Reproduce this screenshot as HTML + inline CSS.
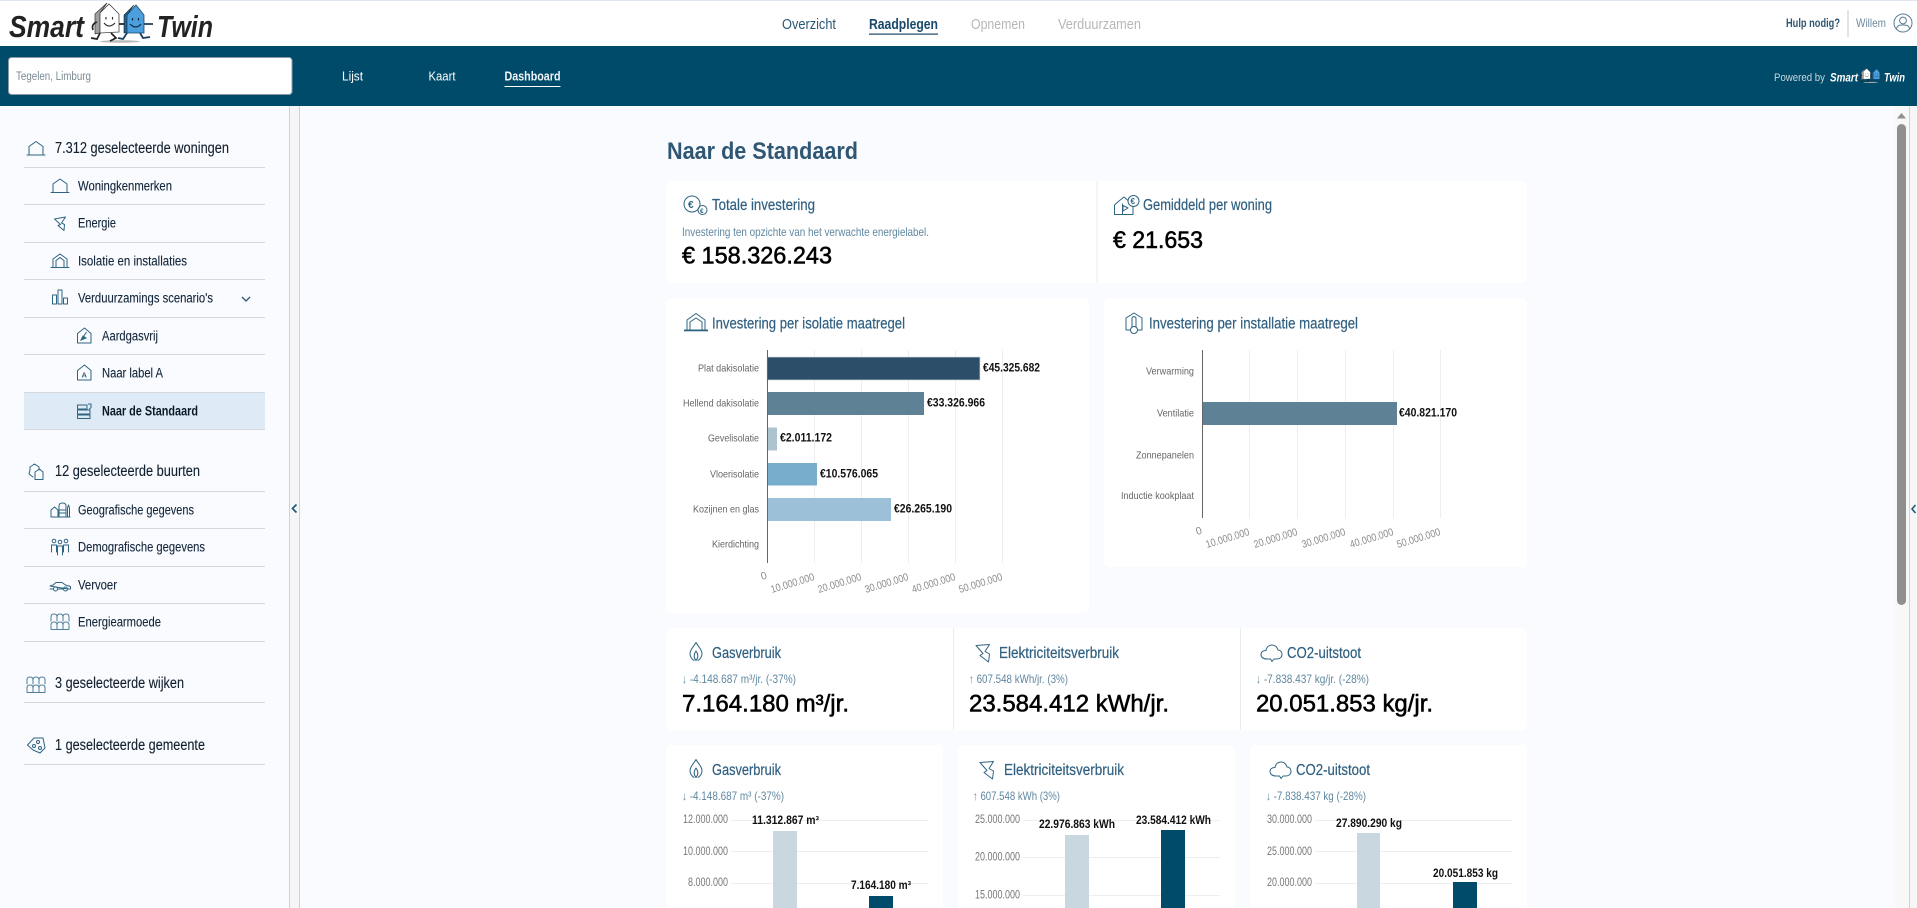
<!DOCTYPE html>
<html lang="nl"><head><meta charset="utf-8"><title>Smart Twin - Naar de Standaard</title>
<style>
html,body{margin:0;padding:0;width:1917px;height:908px;overflow:hidden;background:#f9fbff}
svg{display:block;font-family:"Liberation Sans",Arial,sans-serif}
.ln{stroke:#d5d9dd;stroke-width:1}
.m{font-size:15.5px;fill:#12202e;stroke:#12202e;stroke-width:.12px}
.s{font-size:13.5px;fill:#14263a;stroke:#14263a;stroke-width:.12px}
.t{font-size:15.5px;fill:#2f5f80;stroke:#2f5f80;stroke-width:.2px}
.v{font-size:24px;fill:#000;stroke:#000;stroke-width:.55px}
.u{font-size:12px;fill:#5f87a0}
.n{font-size:14.5px}
.a{font-size:10.5px;fill:#666}
.k{font-size:10.5px;fill:#8a8a8a}
.y{font-size:11.5px;fill:#777}
.b{font-size:11.5px;font-weight:bold;fill:#111}
.i{fill:none;stroke:#2f6480;stroke-width:1;stroke-linejoin:round;stroke-linecap:round}
.g{stroke:#eceef0;stroke-width:1}
</style></head><body>
<svg width="1917" height="908" viewBox="0 0 1917 908" xmlns="http://www.w3.org/2000/svg">
<defs>
<g id="logo">
<ellipse cx="29" cy="41.500" rx="20" ry="1.300" fill="#bbb"/>
<path d="M16 3 L4 14 L4 34 L9 33 L9 13Z" fill="#a0a0a0" stroke="#333" stroke-width=".7"/>
<path d="M9 13 L18 4 L28 14 L28 32 L9 33Z" fill="#fff" stroke="#444" stroke-width=".8"/>
<path d="M13 23 Q18 29 24 23" fill="none" stroke="#222" stroke-width="1"/>
<path d="M15 17v2.500M21.500 17v2.500" stroke="#222" stroke-width="1.100"/>
<path d="M43 5 L33 15 L33 33 L36 33 L36 15Z" fill="#23618c" stroke="#123" stroke-width=".6"/>
<path d="M36 15 L45 5 L53 15 L53 33 L36 33Z" fill="#4a9fdc" stroke="#16466b" stroke-width=".8"/>
<path d="M39 24 Q45 30 50 24" fill="none" stroke="#123" stroke-width="1"/>
<path d="M41.500 18v2.500M47.500 18v2.500" stroke="#123" stroke-width="1.100"/>
<path d="M9 33 L6 39 L0 38 M20 33 L25 38 L19 41 M6 22 Q0 24 2 30 M28 24 H33" fill="none" stroke="#222" stroke-width="1.700"/>
<path d="M36 33 L32 39 L27 38 M49 33 L52 38 L59 37 M53 24 H62" fill="none" stroke="#1c3f5a" stroke-width="1.800"/>
</g>
<g id="house" class="i"><path d="M0 13.500H18M2 13.500V5L9 0 16 5V13.500"/></g>
<g id="bolt" class="i"><path d="M0 2 L11 0 L7 6 L10 7.500 L9.500 13.500 L3.500 8.500 L6 7.500 Z"/></g>
<g id="ins" class="i"><path d="M0 13.500H18M2 13.500V5L9 0 16 5V13.500M5 13V6.500L9 3.500 13 6.500V13"/></g>
<g id="arches" class="i" style="stroke:#4f7e99"><path d="M0 7V3Q0 0 3 0T6 3V7M6 3Q6 0 9 0T12 3V7M12 3Q12 0 15 0T18 3V7M0 15V11Q0 8 3 8T6 11V15M6 11Q6 8 9 8T12 11V15M12 11Q12 8 15 8T18 11V15M0 15.500H18"/></g>
<g id="flame" class="i"><path d="M4 18 C1 16 0 13.500 0 11 C0 7 4 4 6 0 C8 4 12 7 12 11 C12 13.500 11 16 8 18 M6 18 C3.500 15 3.500 12 6 8.500 C8.500 12 8.500 15 6 18Z"/></g>
<g id="bolt2" class="i"><path d="M0 1 L13.500 0 L9 7 L13.500 9.500 L12.500 17.500 L4 11 L7 9 Z"/></g>
<g id="cloud" class="i"><path d="M6 15 C2 15 0 13 0 10.500 C0 8 2 6.500 5 6.500 C5.500 3 8 1 11 1 C14 1 16 3 17 6 C19.500 6 21 8 21 10.500 C21 13 19 15 16 15 L13 15 L11 17.500 L9.500 15Z"/></g>
</defs>

<rect width="1917" height="908" fill="#f9fbff"/>
<!-- header -->
<rect width="1917" height="46" fill="#fff"/><rect width="1917" height="1" fill="#e1e7ef"/>
<text x="9" y="37" font-size="31" font-style="italic" font-weight="bold" fill="#222" textLength="75" lengthAdjust="spacingAndGlyphs">Smart</text>
<use href="#logo" x="91"/>
<text x="157" y="37" font-size="31" font-style="italic" font-weight="bold" fill="#222" textLength="56" lengthAdjust="spacingAndGlyphs">Twin</text>
<text x="782" y="29" class="n" fill="#2a5877" textLength="54" lengthAdjust="spacingAndGlyphs">Overzicht</text>
<text x="869" y="29" class="n" font-weight="bold" fill="#17486a" textLength="69" lengthAdjust="spacingAndGlyphs">Raadplegen</text>
<rect x="869" y="33.500" width="69" height="1.200" fill="#17486a"/>
<text x="971" y="29" class="n" fill="#b5b7ba" textLength="54" lengthAdjust="spacingAndGlyphs">Opnemen</text>
<text x="1058" y="29" class="n" fill="#b5b7ba" textLength="83" lengthAdjust="spacingAndGlyphs">Verduurzamen</text>
<text x="1786" y="27" font-size="12" font-weight="bold" fill="#2f5673" textLength="54" lengthAdjust="spacingAndGlyphs">Hulp nodig?</text>
<rect x="1847.500" y="10" width="1" height="27" fill="#c3c8cc"/>
<text x="1856" y="27" font-size="12" fill="#6e8ba0" textLength="30" lengthAdjust="spacingAndGlyphs">Willem</text>
<g fill="none" stroke="#5a7d94" stroke-width="1"><circle cx="1903" cy="23" r="9"/><circle cx="1903" cy="20.500" r="3.400"/><path d="M1896.500 29 C1897 25 1900 25 1903 25 C1906 25 1909 25 1909.500 29"/></g>

<!-- blue bar -->
<rect y="46" width="1917" height="60" fill="#004a6a"/>
<rect x="8.500" y="57.500" width="283.500" height="37" rx="3" fill="#fff" stroke="#8b9aa5"/>
<text x="16" y="80" font-size="11.500" fill="#7a8a95" textLength="75" lengthAdjust="spacingAndGlyphs">Tegelen, Limburg</text>
<text x="342" y="80.500" font-size="12.500" fill="#fff" textLength="21" lengthAdjust="spacingAndGlyphs">Lijst</text>
<text x="428.500" y="80.500" font-size="12.500" fill="#fff" textLength="27" lengthAdjust="spacingAndGlyphs">Kaart</text>
<text x="504.500" y="80.500" font-size="12.500" font-weight="bold" fill="#f2f6f9" textLength="56" lengthAdjust="spacingAndGlyphs">Dashboard</text>
<rect x="504.500" y="86" width="56" height="1" fill="#fff"/>
<text x="1774" y="81" font-size="11" fill="#c9d6de" textLength="51" lengthAdjust="spacingAndGlyphs">Powered by</text>
<text x="1830" y="81.500" font-size="12" font-style="italic" font-weight="bold" fill="#fff" textLength="28" lengthAdjust="spacingAndGlyphs">Smart</text>
<use href="#logo" transform="translate(1860 67) scale(.37)"/>
<text x="1884" y="81.500" font-size="12" font-style="italic" font-weight="bold" fill="#fff" textLength="21" lengthAdjust="spacingAndGlyphs">Twin</text>

<!-- sidebar strip -->
<rect x="289" y="106" width="10" height="802" fill="#f6f6f6"/>
<rect x="289" y="106" width="1" height="802" fill="#d2d2d2"/><rect x="299" y="106" width="1" height="802" fill="#d2d2d2"/>
<path d="M296.500 504.500 L292.500 508.500 L296.500 512.500" fill="none" stroke="#1d5a80" stroke-width="1.700"/>

<!-- sidebar -->
<rect x="24" y="392" width="241" height="37" fill="#deeaf5"/>
<g class="ln">
<path d="M24 167.500H265M24 204.500H265M24 242.500H265M24 279.500H265M24 317.500H265M24 354.500H265M24 392.500H265M24 429.500H265M24 491.500H265M24 528.500H265M24 566.500H265M24 603.500H265M24 641.500H265M24 702.500H265M24 764.500H265"/>
</g>
<use href="#house" x="27" y="141.500"/>
<text x="55" y="153" class="m" textLength="174" lengthAdjust="spacingAndGlyphs">7.312 geselecteerde woningen</text>
<use href="#house" x="51" y="179"/>
<text x="78" y="190.500" class="s" textLength="94" lengthAdjust="spacingAndGlyphs">Woningkenmerken</text>
<use href="#bolt" x="54.500" y="217"/>
<text x="78" y="227.500" class="s" textLength="38" lengthAdjust="spacingAndGlyphs">Energie</text>
<use href="#ins" x="51" y="254"/>
<text x="78" y="265.500" class="s" textLength="109" lengthAdjust="spacingAndGlyphs">Isolatie en installaties</text>
<g class="i"><rect x="52.500" y="295" width="4" height="9"/><rect x="58" y="290" width="4" height="14"/><rect x="63.500" y="298" width="4" height="6"/></g>
<text x="78" y="302.500" class="s" textLength="135" lengthAdjust="spacingAndGlyphs">Verduurzamings scenario's</text>
<path d="M242 297 L246 301 L250 297" fill="none" stroke="#2f5673" stroke-width="1.300"/>
<g class="i"><path d="M77.500 343V333.500L84.500 328 91 333.500V343Z"/></g><path d="M86.500 332 L82 339 M81 340 L83 336 L86 338Z" stroke="#2f6480" fill="#2f6480"/>
<text x="102" y="340.500" class="s" textLength="56" lengthAdjust="spacingAndGlyphs">Aardgasvrij</text>
<g class="i"><path d="M77.500 380V370.500L84.500 365 91 370.500V380Z"/></g><text x="81.500" y="377.500" font-size="7.500" font-weight="bold" fill="#2f6480">A</text>
<text x="102" y="377.500" class="s" textLength="61" lengthAdjust="spacingAndGlyphs">Naar label A</text>
<g class="i" stroke-width="1.200"><path d="M77.500 405H87V409H77.500ZM77.500 410H90V414H77.500ZM77.500 415H90V418.500H77.500ZM88.500 404H91V407.500L89.500 409"/></g>
<text x="102" y="415.500" font-size="13.500" font-weight="bold" fill="#0c1a28" textLength="96" lengthAdjust="spacingAndGlyphs">Naar de Standaard</text>

<g class="i"><path d="M30 470V467L34.500 464 39 467V470M30 470L29 474 33 477M35 472L39.500 469 43 472V479.500H35Z"/></g>
<text x="55" y="476" class="m" textLength="145" lengthAdjust="spacingAndGlyphs">12 geselecteerde buurten</text>
<g class="i"><path d="M51 517V510L54.500 507 58 510V517M51 517H70M59 517V506Q59 503 62.500 503T66 506V517M59 510H66M59 513H66M67.500 517V508L68.500 505 69.500 508V517"/></g>
<text x="78" y="514.500" class="s" textLength="116" lengthAdjust="spacingAndGlyphs">Geografische gegevens</text>
<g class="i"><circle cx="54" cy="541" r="1.800"/><circle cx="60" cy="542" r="1.800"/><circle cx="66" cy="541" r="1.800"/><path d="M51.500 552V545H56.500V552M57.500 555V546H62.500V555M63.500 552V545H68.500V552"/></g>
<text x="78" y="551.500" class="s" textLength="127" lengthAdjust="spacingAndGlyphs">Demografische gegevens</text>
<g class="i"><path d="M50 589H53M58 589H63M68 589H70.500V586.500L65.500 585 62 582.500H56L53 585 50 586Z"/><circle cx="55.500" cy="589" r="2"/><circle cx="65.500" cy="589" r="2"/></g>
<text x="78" y="589.500" class="s" textLength="39" lengthAdjust="spacingAndGlyphs">Vervoer</text>
<use href="#arches" x="51" y="614"/>
<text x="78" y="626.500" class="s" textLength="83" lengthAdjust="spacingAndGlyphs">Energiearmoede</text>
<use href="#arches" x="27" y="677"/>
<text x="55" y="688" class="m" textLength="129" lengthAdjust="spacingAndGlyphs">3 geselecteerde wijken</text>
<g class="i"><path d="M27.500 745L34 738H43L45 748L40 753L33 750Z"/><circle cx="38" cy="742" r="1.500"/><circle cx="34" cy="746" r="1.500"/><circle cx="40" cy="748" r="1.500"/></g>
<text x="55" y="750" class="m" textLength="150" lengthAdjust="spacingAndGlyphs">1 geselecteerde gemeente</text>

<!-- scrollbar and right strip -->
<rect x="1895" y="106" width="14" height="802" fill="#f8f8f8"/>
<path d="M1901.500 113 L1906 118.500H1897Z" fill="#8f8f8f"/>
<rect x="1897" y="124" width="9" height="481" rx="4.500" fill="#8f8f8f"/>
<rect x="1909" y="106" width="8" height="802" fill="#f6f6f6"/><rect x="1909" y="106" width="1" height="802" fill="#d2d2d2"/>
<path d="M1915.500 505 L1912 509 L1915.500 513" fill="none" stroke="#1d5a80" stroke-width="1.600"/>

<!-- title -->
<text x="667" y="159" font-size="24" font-weight="bold" fill="#2f5673" textLength="191" lengthAdjust="spacingAndGlyphs">Naar de Standaard</text>

<!-- card 1 -->
<rect x="666" y="181" width="861" height="102" rx="6" fill="#fff"/>
<rect x="1096.500" y="181" width="1" height="102" fill="#e9ebee"/>
<g class="i" stroke-width="1.200"><circle cx="692" cy="204" r="8"/><circle cx="702.500" cy="210" r="4.500"/></g>
<text x="688" y="208" font-size="10" font-weight="bold" fill="#2f6480">€</text><text x="700" y="213" font-size="6.500" font-weight="bold" fill="#2f6480">€</text>
<text x="712" y="210" class="t" textLength="103" lengthAdjust="spacingAndGlyphs">Totale investering</text>
<text x="682" y="236" class="u" textLength="247" lengthAdjust="spacingAndGlyphs">Investering ten opzichte van het verwachte energielabel.</text>
<text x="682" y="263.500" class="v" textLength="150" lengthAdjust="spacingAndGlyphs">€ 158.326.243</text>
<g class="i" stroke-width="1.100"><path d="M1114.500 205V214.500H1133V205L1124 197 1119 201Z"/><path d="M1122.500 204V214M1123 205.500L1128 208 1123 211Z"/><circle cx="1133.500" cy="201" r="5.500" fill="#fff"/></g>
<text x="1130.500" y="204" font-size="8" font-weight="bold" fill="#2f6480">€</text>
<text x="1143" y="210" class="t" textLength="129" lengthAdjust="spacingAndGlyphs">Gemiddeld per woning</text>
<text x="1113" y="248" class="v" textLength="90" lengthAdjust="spacingAndGlyphs">€ 21.653</text>

<!-- isolatie card -->
<rect x="666" y="298" width="423" height="315" rx="6" fill="#fff"/>
<g class="i" stroke-width="1.100"><path d="M687 330V320L696 313.500 705 320V330M690 329.500V322L696 318 702 322V329.500"/></g><rect x="684" y="329.500" width="24" height="1.800" fill="#2f6480"/>
<text x="712" y="328.500" class="t" textLength="193" lengthAdjust="spacingAndGlyphs">Investering per isolatie maatregel</text>
<g class="g"><path d="M814.500 350V563M861.500 350V563M908.500 350V563M955.500 350V563M1002.500 350V563"/></g>
<rect x="767" y="357" width="213" height="23" fill="#2c4e68" stroke="#d5dde2" stroke-width=".7"/>
<rect x="767" y="392" width="157" height="23" fill="#5f8196"/>
<rect x="767" y="427.500" width="10" height="23" fill="#adc4cf"/>
<rect x="767" y="463" width="50" height="22.500" fill="#78adcc"/>
<rect x="767" y="498" width="124" height="23" fill="#9cc0d8"/>
<rect x="767" y="350" width="1" height="213" fill="#666"/>
<text x="698" y="371.500" class="a" textLength="61" lengthAdjust="spacingAndGlyphs">Plat dakisolatie</text>
<text x="683" y="406.500" class="a" textLength="76" lengthAdjust="spacingAndGlyphs">Hellend dakisolatie</text>
<text x="708" y="441.500" class="a" textLength="51" lengthAdjust="spacingAndGlyphs">Gevelisolatie</text>
<text x="710" y="477.500" class="a" textLength="49" lengthAdjust="spacingAndGlyphs">Vloerisolatie</text>
<text x="693" y="512.500" class="a" textLength="66" lengthAdjust="spacingAndGlyphs">Kozijnen en glas</text>
<text x="712" y="547.500" class="a" textLength="47" lengthAdjust="spacingAndGlyphs">Kierdichting</text>
<text x="983" y="371.500" class="b" textLength="57" lengthAdjust="spacingAndGlyphs">€45.325.682</text>
<text x="927" y="406.500" class="b" textLength="58" lengthAdjust="spacingAndGlyphs">€33.326.966</text>
<text x="780" y="441.500" class="b" textLength="52" lengthAdjust="spacingAndGlyphs">€2.011.172</text>
<text x="820" y="477.500" class="b" textLength="58" lengthAdjust="spacingAndGlyphs">€10.576.065</text>
<text x="894" y="512.500" class="b" textLength="58" lengthAdjust="spacingAndGlyphs">€26.265.190</text>
<g class="k">
<text transform="translate(762 580) rotate(-17)">0</text>
<text transform="translate(772 593) rotate(-17)" textLength="45" lengthAdjust="spacingAndGlyphs">10.000.000</text>
<text transform="translate(819 593) rotate(-17)" textLength="45" lengthAdjust="spacingAndGlyphs">20.000.000</text>
<text transform="translate(866 593) rotate(-17)" textLength="45" lengthAdjust="spacingAndGlyphs">30.000.000</text>
<text transform="translate(913 593) rotate(-17)" textLength="45" lengthAdjust="spacingAndGlyphs">40.000.000</text>
<text transform="translate(960 593) rotate(-17)" textLength="45" lengthAdjust="spacingAndGlyphs">50.000.000</text>
</g>

<!-- installatie card -->
<rect x="1104" y="298" width="423" height="269" rx="6" fill="#fff"/>
<g class="i" stroke-width="1.100"><path d="M1126 330V318L1134 313 1142 318V330H1138M1130 330H1126"/><path d="M1132 327V318Q1134 315 1136 318V327"/><circle cx="1134" cy="330" r="3.500"/></g>
<text x="1149" y="328.500" class="t" textLength="209" lengthAdjust="spacingAndGlyphs">Investering per installatie maatregel</text>
<g class="g"><path d="M1249.500 350V518M1297.500 350V518M1345.500 350V518M1393.500 350V518M1440.500 350V518"/></g>
<rect x="1202.500" y="402" width="194.500" height="23" fill="#5f8196"/>
<rect x="1202" y="350" width="1" height="168" fill="#666"/>
<text x="1146" y="374.500" class="a" textLength="48" lengthAdjust="spacingAndGlyphs">Verwarming</text>
<text x="1157" y="416.500" class="a" textLength="37" lengthAdjust="spacingAndGlyphs">Ventilatie</text>
<text x="1136" y="458.500" class="a" textLength="58" lengthAdjust="spacingAndGlyphs">Zonnepanelen</text>
<text x="1121" y="499" class="a" textLength="73" lengthAdjust="spacingAndGlyphs">Inductie kookplaat</text>
<text x="1399" y="416.500" class="b" textLength="58" lengthAdjust="spacingAndGlyphs">€40.821.170</text>
<g class="k">
<text transform="translate(1197 535) rotate(-17)">0</text>
<text transform="translate(1207 548) rotate(-17)" textLength="45" lengthAdjust="spacingAndGlyphs">10.000.000</text>
<text transform="translate(1255 548) rotate(-17)" textLength="45" lengthAdjust="spacingAndGlyphs">20.000.000</text>
<text transform="translate(1303 548) rotate(-17)" textLength="45" lengthAdjust="spacingAndGlyphs">30.000.000</text>
<text transform="translate(1351 548) rotate(-17)" textLength="45" lengthAdjust="spacingAndGlyphs">40.000.000</text>
<text transform="translate(1398 548) rotate(-17)" textLength="45" lengthAdjust="spacingAndGlyphs">50.000.000</text>
</g>

<!-- stat card -->
<rect x="666" y="628" width="861" height="102" rx="6" fill="#fff"/>
<rect x="953" y="628" width="1" height="102" fill="#e9ebee"/><rect x="1240" y="628" width="1" height="102" fill="#e9ebee"/>
<use href="#flame" x="690" y="642.500"/>
<text x="712" y="658" class="t" textLength="69" lengthAdjust="spacingAndGlyphs">Gasverbruik</text>
<text x="682" y="683" class="u" textLength="114" lengthAdjust="spacingAndGlyphs">↓ -4.148.687 m³/jr. (-37%)</text>
<text x="682" y="711.500" class="v" textLength="167" lengthAdjust="spacingAndGlyphs">7.164.180 m³/jr.</text>
<use href="#bolt2" x="976" y="644.500"/>
<text x="999" y="658" class="t" textLength="120" lengthAdjust="spacingAndGlyphs">Elektriciteitsverbruik</text>
<text x="969" y="683" class="u" textLength="99" lengthAdjust="spacingAndGlyphs">↑ 607.548 kWh/jr. (3%)</text>
<text x="969" y="711.500" class="v" textLength="200" lengthAdjust="spacingAndGlyphs">23.584.412 kWh/jr.</text>
<use href="#cloud" x="1261" y="644"/>
<text x="1287" y="658" class="t" textLength="74" lengthAdjust="spacingAndGlyphs">CO2-uitstoot</text>
<text x="1256" y="683" class="u" textLength="113" lengthAdjust="spacingAndGlyphs">↓ -7.838.437 kg/jr. (-28%)</text>
<text x="1256" y="711.500" class="v" textLength="177" lengthAdjust="spacingAndGlyphs">20.051.853 kg/jr.</text>

<!-- bottom cards -->
<rect x="666" y="745" width="277" height="175" rx="6" fill="#fff"/>
<rect x="958" y="745" width="277" height="175" rx="6" fill="#fff"/>
<rect x="1250" y="745" width="277" height="175" rx="6" fill="#fff"/>

<use href="#flame" x="690" y="759.500"/>
<text x="712" y="775" class="t" textLength="69" lengthAdjust="spacingAndGlyphs">Gasverbruik</text>
<text x="682" y="800" class="u" textLength="102" lengthAdjust="spacingAndGlyphs">↓ -4.148.687 m³ (-37%)</text>
<g class="g"><path d="M731 820.500H928M731 851.500H928M731 883.500H928"/></g>
<text x="683" y="823" class="y" textLength="45" lengthAdjust="spacingAndGlyphs">12.000.000</text>
<text x="683" y="855" class="y" textLength="45" lengthAdjust="spacingAndGlyphs">10.000.000</text>
<text x="688" y="886" class="y" textLength="40" lengthAdjust="spacingAndGlyphs">8.000.000</text>
<rect x="773" y="831" width="24" height="80" fill="#c9d8e0"/>
<rect x="869" y="896" width="24" height="15" fill="#004a6a"/>
<text x="752" y="824" class="b" textLength="67" lengthAdjust="spacingAndGlyphs">11.312.867 m³</text>
<text x="851" y="889" class="b" textLength="60" lengthAdjust="spacingAndGlyphs">7.164.180 m³</text>

<use href="#bolt2" x="980" y="761.500"/>
<text x="1004" y="775" class="t" textLength="120" lengthAdjust="spacingAndGlyphs">Elektriciteitsverbruik</text>
<text x="973" y="800" class="u" textLength="87" lengthAdjust="spacingAndGlyphs">↑ 607.548 kWh (3%)</text>
<g class="g"><path d="M1023 820.500H1220M1023 857.500H1220M1023 895.500H1220"/></g>
<text x="975" y="823" class="y" textLength="45" lengthAdjust="spacingAndGlyphs">25.000.000</text>
<text x="975" y="860.500" class="y" textLength="45" lengthAdjust="spacingAndGlyphs">20.000.000</text>
<text x="975" y="898.500" class="y" textLength="45" lengthAdjust="spacingAndGlyphs">15.000.000</text>
<rect x="1065" y="835" width="24" height="76" fill="#c9d8e0"/>
<rect x="1161" y="830" width="24" height="81" fill="#004a6a"/>
<text x="1039" y="828" class="b" textLength="76" lengthAdjust="spacingAndGlyphs">22.976.863 kWh</text>
<text x="1136" y="824" class="b" textLength="75" lengthAdjust="spacingAndGlyphs">23.584.412 kWh</text>

<use href="#cloud" x="1270" y="761"/>
<text x="1296" y="775" class="t" textLength="74" lengthAdjust="spacingAndGlyphs">CO2-uitstoot</text>
<text x="1266" y="800" class="u" textLength="100" lengthAdjust="spacingAndGlyphs">↓ -7.838.437 kg (-28%)</text>
<g class="g"><path d="M1315 820.500H1512M1315 851.500H1512M1315 883.500H1512"/></g>
<text x="1267" y="823" class="y" textLength="45" lengthAdjust="spacingAndGlyphs">30.000.000</text>
<text x="1267" y="855" class="y" textLength="45" lengthAdjust="spacingAndGlyphs">25.000.000</text>
<text x="1267" y="886" class="y" textLength="45" lengthAdjust="spacingAndGlyphs">20.000.000</text>
<rect x="1357" y="833" width="23" height="78" fill="#c9d8e0"/>
<rect x="1453" y="882" width="24" height="29" fill="#004a6a"/>
<text x="1336" y="827" class="b" textLength="66" lengthAdjust="spacingAndGlyphs">27.890.290 kg</text>
<text x="1433" y="877" class="b" textLength="65" lengthAdjust="spacingAndGlyphs">20.051.853 kg</text>
</svg>
</body></html>
